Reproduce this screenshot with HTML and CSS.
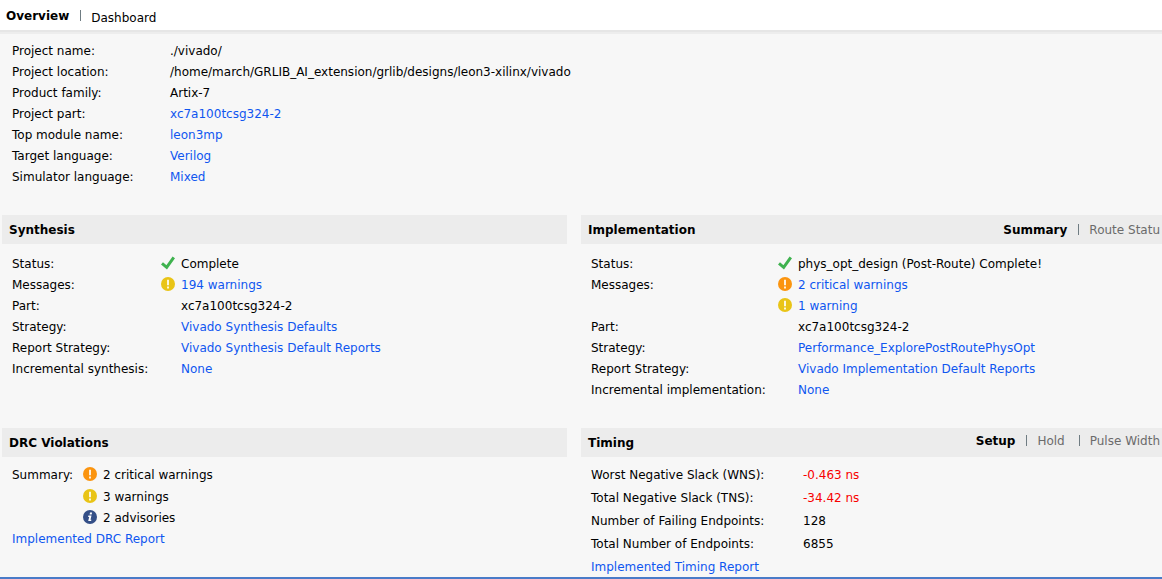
FILE: index.html
```html
<!DOCTYPE html>
<html lang="en">
<head>
<meta charset="utf-8">
<meta name="viewport" content="width=device-width, initial-scale=1">
<title>Project Summary</title>
<link rel="stylesheet" href="styles.css">
</head>
<body>
<svg class="sprite" width="0" height="0" aria-hidden="true">
  <symbol id="check" viewBox="0 0 14 14"><path d="M1 7.4 5.7 11.4 12.8 1.4" fill="none" stroke="#3fb24f" stroke-width="3"/></symbol>
  <symbol id="alert" viewBox="0 0 14 14"><circle cx="7" cy="7" r="7" fill="currentColor"/><path d="M6 2.8h2v5.4H6zM6 9.4h2v2H6z" fill="#fff" fill-opacity=".85"/></symbol>
  <symbol id="info" viewBox="0 0 14 14"><circle cx="7" cy="7" r="7" fill="currentColor"/><path d="M7 2.6h2.1l-.4 1.8H6.6zM5.4 5.6h3.1l-1 4.2h.9l-.3 1.3H5.2l1-4.2H5.1z" fill="#fff"/></symbol>
</svg>
<div class="page">
  <nav class="topbar">
    <button class="tab active" type="button">Overview</button>
    <span class="divider"></span>
    <button class="tab lowered" type="button">Dashboard</button>
  </nav>
  <main class="content">
    <dl class="props project">
      <dt>Project name:</dt><dd>./vivado/</dd>
      <dt>Project location:</dt><dd>/home/march/GRLIB_AI_extension/grlib/designs/leon3-xilinx/vivado</dd>
      <dt>Product family:</dt><dd>Artix-7</dd>
      <dt>Project part:</dt><dd><a href="#">xc7a100tcsg324-2</a></dd>
      <dt>Top module name:</dt><dd><a href="#">leon3mp</a></dd>
      <dt>Target language:</dt><dd><a href="#">Verilog</a></dd>
      <dt>Simulator language:</dt><dd><a href="#">Mixed</a></dd>
    </dl>
    <div class="panels">
      <section class="panel">
        <header class="panel-head"><h2>Synthesis</h2></header>
        <dl class="props run synthesis">
          <dt>Status:</dt><dd class="marked"><svg class="icon"><use href="#check"/></svg>Complete</dd>
          <dt>Messages:</dt><dd class="marked"><svg class="icon warning"><use href="#alert"/></svg><a href="#">194 warnings</a></dd>
          <dt>Part:</dt><dd>xc7a100tcsg324-2</dd>
          <dt>Strategy:</dt><dd><a href="#">Vivado Synthesis Defaults</a></dd>
          <dt>Report Strategy:</dt><dd><a href="#">Vivado Synthesis Default Reports</a></dd>
          <dt>Incremental synthesis:</dt><dd><a href="#">None</a></dd>
        </dl>
      </section>
      <section class="panel">
        <header class="panel-head">
          <h2>Implementation</h2>
          <div class="tabs">
            <button class="tab active" type="button">Summary</button>
            <span class="divider"></span>
            <button class="tab" type="button">Route Statu</button>
          </div>
        </header>
        <dl class="props run implementation">
          <dt>Status:</dt><dd class="marked"><svg class="icon"><use href="#check"/></svg>phys_opt_design (Post-Route) Complete!</dd>
          <dt>Messages:</dt><dd class="marked"><svg class="icon critical"><use href="#alert"/></svg><a href="#">2 critical warnings</a></dd>
          <dd class="marked"><svg class="icon warning"><use href="#alert"/></svg><a href="#">1 warning</a></dd>
          <dt>Part:</dt><dd>xc7a100tcsg324-2</dd>
          <dt>Strategy:</dt><dd><a href="#">Performance_ExplorePostRoutePhysOpt</a></dd>
          <dt>Report Strategy:</dt><dd><a href="#">Vivado Implementation Default Reports</a></dd>
          <dt>Incremental implementation:</dt><dd><a href="#">None</a></dd>
        </dl>
      </section>
      <section class="panel">
        <header class="panel-head"><h2>DRC Violations</h2></header>
        <div class="report">
          <dl class="props run drc">
            <dt>Summary:</dt><dd class="marked"><svg class="icon critical"><use href="#alert"/></svg>2 critical warnings</dd>
            <dd class="marked"><svg class="icon warning"><use href="#alert"/></svg>3 warnings</dd>
            <dd class="marked"><svg class="icon advisory"><use href="#info"/></svg>2 advisories</dd>
          </dl>
          <a class="report-link" href="#">Implemented DRC Report</a>
        </div>
      </section>
      <section class="panel">
        <header class="panel-head">
          <h2>Timing</h2>
          <div class="tabs raised">
            <button class="tab active" type="button">Setup</button>
            <span class="divider"></span>
            <button class="tab hold" type="button">Hold</button>
            <span class="divider"></span>
            <button class="tab" type="button">Pulse Width</button>
          </div>
        </header>
        <div class="report">
          <dl class="props timing">
            <dt>Worst Negative Slack (WNS):</dt><dd class="negative">-0.463 ns</dd>
            <dt>Total Negative Slack (TNS):</dt><dd class="negative">-34.42 ns</dd>
            <dt>Number of Failing Endpoints:</dt><dd>128</dd>
            <dt>Total Number of Endpoints:</dt><dd>6855</dd>
          </dl>
          <a class="report-link" href="#">Implemented Timing Report</a>
        </div>
      </section>
    </div>
  </main>
</div>
</body>
</html>
```
FILE: styles.css
```css
* { box-sizing: border-box; }

body {
  margin: 0;
  background: #f7f7f7;
  color: #000;
  font: 12px/21px "DejaVu Sans", sans-serif;
}

.sprite { position: absolute; }

.page {
  display: flex;
  flex-direction: column;
  min-height: 100vh;
  border-bottom: 2px solid #4a7bc8;
  overflow: hidden;
}

a { color: #0f56f0; text-decoration: none; }
a:hover { text-decoration: underline; }

.topbar {
  display: flex;
  align-items: center;
  height: 34px;
  padding: 0 6px 1px;
  background: linear-gradient(#fff 30px, #e6e6e6 30px, #e6e6e6 32px, #ededed 32px);
}

.tab {
  padding: 0;
  border: 0;
  background: none;
  color: #6b6b6b;
  font: inherit;
  white-space: nowrap;
  cursor: pointer;
}
.tab.active { color: #000; font-weight: bold; }
.tab.lowered { padding-top: 4px; color: #000; }

.divider {
  flex: none;
  width: 1px;
  height: 11px;
  margin: 0 10px 2px 11px;
  background: #6f7c82;
}

.content { padding-left: 2px; }

.props {
  display: grid;
  grid-auto-rows: 21px;
  align-items: start;
  margin: 0;
  padding-left: 10px;
  white-space: nowrap;
}
.props dt { grid-column: 1; }
.props dd { grid-column: 2; margin: 0; }

.project { grid-template-columns: 158px 1fr; padding-top: 7px; padding-bottom: 27px; }

.panels {
  display: grid;
  grid-template-columns: 565fr 581fr;
  column-gap: 14px;
}
.panel { min-width: 0; }

.panel-head {
  display: flex;
  align-items: center;
  justify-content: space-between;
  height: 29px;
  padding: 2px 0 0 7px;
  background: #ececec;
}
.panel-head h2 { margin: 0; color: #000; font-size: 12px; }

.tabs { display: flex; align-items: center; padding-right: 2px; }
.tabs.raised { padding-bottom: 4px; }
.tab.hold { margin-right: 3px; }

.run { padding-top: 10px; padding-bottom: 27px; }
.run dd { padding-left: 20px; }
.run dd.marked { display: flex; align-items: center; gap: 6px; padding-left: 0; }
.synthesis { grid-template-columns: 149px 1fr; }
.implementation { grid-template-columns: 187px 1fr; }

.icon { flex: none; width: 14px; height: 14px; margin-bottom: 4px; }
.warning { color: #e9c416; }
.critical { color: #fb940f; }
.advisory { color: #344f87; }

.report { padding-top: 8px; }
.report-link { display: block; width: fit-content; margin-left: 10px; line-height: 20px; }
.drc { grid-template-columns: 71px 1fr; grid-template-rows: 22px; padding-top: 0; padding-bottom: 0; }
.timing { grid-template-columns: 212px 1fr; grid-auto-rows: 23px; }
.negative { color: #f80000; }
```
